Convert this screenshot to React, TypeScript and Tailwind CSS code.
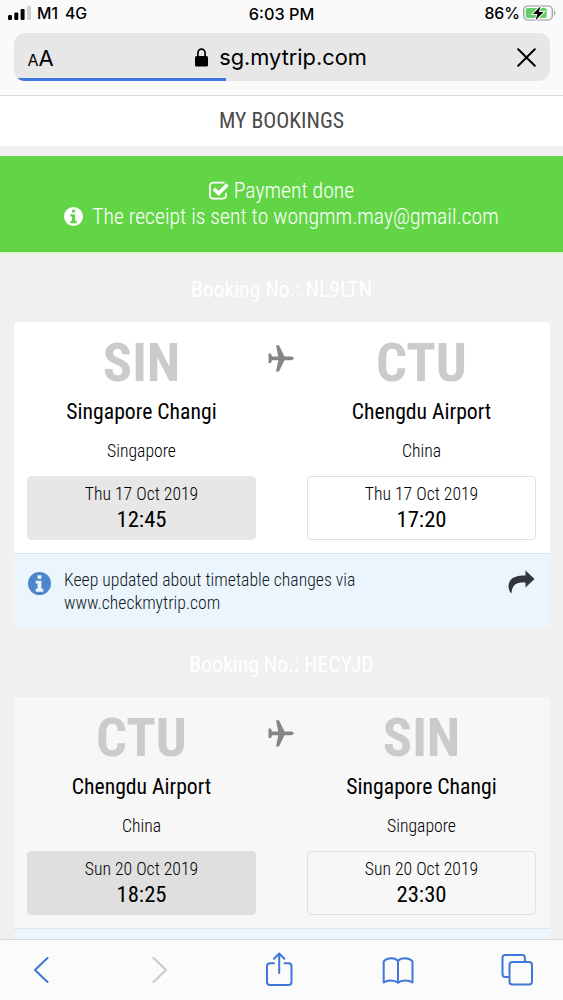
interface Stop {
  code: string;
  airport: string;
  country: string;
  date: string;
  time: string;
}

interface Booking {
  ref: string;
  from: Stop;
  to: Stop;
  dimmed: boolean;
  notice?: string[];
}

const SIN = { code: "SIN", airport: "Singapore Changi", country: "Singapore" };
const CTU = { code: "CTU", airport: "Chengdu Airport", country: "China" };

const BOOKINGS: Booking[] = [
  {
    ref: "NL9LTN",
    from: { ...SIN, date: "Thu 17 Oct 2019", time: "12:45" },
    to: { ...CTU, date: "Thu 17 Oct 2019", time: "17:20" },
    dimmed: false,
    notice: ["Keep updated about timetable changes via", "www.checkmytrip.com"],
  },
  {
    ref: "HECYJD",
    from: { ...CTU, date: "Sun 20 Oct 2019", time: "18:25" },
    to: { ...SIN, date: "Sun 20 Oct 2019", time: "23:30" },
    dimmed: true,
  },
];

function InfoIcon({ size, className }: { size: number; className: string }) {
  return (
    <svg width={size} height={size} viewBox="0 0 24 24" className={className}>
      <path
        fill="currentColor"
        fillRule="evenodd"
        d="M12 0a12 12 0 1 0 0 24 12 12 0 0 0 0-24zM10 3.500h4v3.500h-4zM8 9h6v8.500h2V20.500H8v-3h2V12H8z"
      />
    </svg>
  );
}

function StatusBar() {
  return (
    <div className="grid h-[33px] grid-cols-3 items-start px-2 pt-[4px] text-[16.3px] leading-[20px] font-medium">
      <div className="flex">
        <svg width="24" height="16" viewBox="0 0 24 16" className="mr-[5px]">
          <rect x="0" y="11" width="4" height="5" rx="1.2" />
          <rect x="6.3" y="8.5" width="4" height="7.5" rx="1.2" />
          <rect x="12.6" y="5" width="4" height="11" rx="1.2" />
          <rect x="19" y="2" width="4" height="14" rx="1.2" fill="#cfcfcf" />
        </svg>
        <span className="mr-[7px] text-[15.8px]">M1</span>
        <span className="text-[15.8px]">4G</span>
      </div>
      <span className="text-center">6:03 PM</span>
      <div className="flex justify-end">
        <span className="mr-[3px] text-[15.8px]">86%</span>
        <svg width="33" height="18" viewBox="0 0 33 18" className="-mr-[1px]">
          <rect x="0.7" y="2" width="28.6" height="14" rx="4" fill="none" stroke="#9a9a9a" strokeWidth="1.2" />
          <rect x="2.7" y="4" width="21" height="10" rx="2" fill="#63d069" />
          <path d="M31 6.5c1.6.6 1.6 4.4 0 5z" fill="#9a9a9a" />
          <path d="M17.5 2.2 10 10h4.4l-1.8 6.2L20.5 8h-4.6z" stroke="#fafafa" strokeWidth="2" paintOrder="stroke" />
        </svg>
      </div>
    </div>
  );
}

function AddressBar() {
  return (
    <div className="relative mx-[13.5px] flex h-[48px] shrink-0 items-center justify-between overflow-hidden rounded-[11px] bg-[#e7e7e7] pr-[13px] pl-[14px]">
      <div className="flex w-[40px] items-baseline pt-[2px]">
        <span className="text-[16px]">A</span>
        <span className="text-[22px]">A</span>
      </div>
      <div className="flex items-center">
        <svg width="13" height="19" viewBox="0 0 13 19" className="mr-[11px]">
          <path d="M2.9 9V5.3a3.6 4.1 0 0 1 7.2 0V9" fill="none" stroke="#000" strokeWidth="1.7" />
          <rect y="8" width="13" height="10.5" rx="1.6" />
        </svg>
        <span className="mr-[2px] pt-[1px] text-[21.8px]">sg.mytrip.com</span>
      </div>
      <div className="flex w-[40px] justify-end">
        <svg width="19" height="19" viewBox="0 0 19 19" fill="none" stroke="#000" strokeWidth="2" strokeLinecap="round">
          <path d="m1.2 1.2 16.6 16.6M17.8 1.2 1.2 17.8" />
        </svg>
      </div>
      {/* Page load progress */}
      <div className="absolute bottom-0 left-0 h-[3px] w-[212px] bg-[#3f76e0]" />
    </div>
  );
}

function PaymentBanner() {
  return (
    <div className="h-[98px] shrink-0 border-b-2 border-[#dcf7d4] bg-[#62d546] pt-[22px] text-[21.7px] leading-[26px] font-light text-white">
      <div className="flex items-center justify-center">
        <svg width="21" height="19" viewBox="0 0 21 19" fill="none" stroke="#fff" className="mr-[4px] mb-[2px]">
          <path d="M15.5 1.6H4A3 3 0 0 0 1 4.6v10a3 3 0 0 0 3 3h10a3 3 0 0 0 3-3v-2.8" strokeWidth="1.7" />
          <path d="m5 7.8 4.5 4.6 9-9" strokeWidth="3.5" />
        </svg>
        Payment done
      </div>
      <div className="flex items-center justify-center">
        <InfoIcon size={19} className="mr-[9px] mb-[1px]" />
        The receipt is sent to wongmm.may@gmail.com
      </div>
    </div>
  );
}

function StopColumn({ stop, box }: { stop: Stop; box: string }) {
  return (
    <div className="w-[229px] text-center">
      <div className="h-[78px] pt-[7px] text-[54.5px] leading-[66px] font-bold text-[#cbcbcb]">{stop.code}</div>
      <div className="text-[21.7px] leading-[24px]">{stop.airport}</div>
      <div className="mt-[15px] text-[17.7px] leading-[24px] font-light">{stop.country}</div>
      <div className={`mt-[13px] h-[63.5px] rounded border pt-[5px] ${box}`}>
        <div className="text-[17.7px] leading-[24px] font-light">{stop.date}</div>
        <div className="text-[22.7px] leading-[27px]">{stop.time}</div>
      </div>
    </div>
  );
}

function BookingCard({ booking }: { booking: Booking }) {
  const { dimmed, notice } = booking;
  return (
    <section className="mb-[1px] shrink-0">
      <h2 className="h-[68px] pt-[22px] text-center text-[21.7px] leading-[28px] text-white">
        Booking No.: {booking.ref}
      </h2>
      <div className={`mr-[13px] ml-[14px] rounded-t ${dimmed ? "bg-[#f7f7f7]" : "bg-white"}`}>
        <div className="flex h-[231px] justify-between pr-[14px] pl-[13px]">
          <StopColumn stop={booking.from} box={dimmed ? "border-[#dfdfdf] bg-[#dfdfdf]" : "border-[#e7e7e7] bg-[#e7e7e7]"} />
          <svg width="26" height="28" viewBox="0 0 26 28" className="mt-[22px] mr-[1px] fill-[#868686]">
            <path d="M.5 9.500h2.500l1 2.900h6.300L8 1.200h3l5.500 11.200h6.200c1.800 0 3.100.8 3.100 1.900s-1.300 1.900-3.100 1.900h-6.200L11 27.400H8l2.300-11.200H4L3 19.100H.5z" />
          </svg>
          <StopColumn stop={booking.to} box="border-[#e0e0e0]" />
        </div>
        <div className="flex h-[75px] border-t border-[#dbe4ee] bg-[#ebf5fe] pt-[14px] text-[17.7px] leading-[23px] font-light">
          {notice && (
            <>
              <InfoIcon size={23} className="mt-[4px] ml-[14px] text-[#4e86cb]" />
              <p className="mt-[1px] ml-[13px] flex-1 text-[#111820]">
                {notice.map(line => (
                  <span key={line} className="block">{line}</span>
                ))}
              </p>
              <svg width="28" height="24" viewBox="0 0 28 24" className="mt-[2px] mr-[15px] fill-[#30363b]">
                <path d="M18.500.5 27.500 9l-9 8.500v-5C10 12 5 14 4.500 23.500 1.500 20.500.8 16 2.300 12.200 4.500 7 10 5.400 18.500 5.400z" />
              </svg>
            </>
          )}
        </div>
      </div>
    </section>
  );
}

function Toolbar() {
  return (
    <nav className="h-[61px] shrink-0 border-t border-[#d5d9de] bg-[#fbfbfb]">
      <svg width="563" height="60" viewBox="0 940 563 60" fill="none" stroke="#3f78d8" strokeWidth="2" strokeLinecap="round" strokeLinejoin="round">
        <path d="m47.500 958-12.500 12 12.500 12" />
        <path d="m153.500 958 12.500 12-12.500 12" stroke="#c9c9c9" />
        <path d="M274 963.200h-4a3 3 0 0 0-3 3V982a3 3 0 0 0 3 3h18.500a3 3 0 0 0 3-3v-15.800a3 3 0 0 0-3-3h-4M279.200 973v-19M274 958.800l5.200-5.300 5.200 5.300" />
        <path d="M398 961c-3-3.600-11-3.600-14.300.4v21.100c3.500-2.800 11-2.800 14.300.2 3.300-3 11-3 14.500-.2v-21.100c-3.500-4-11.500-4-14.500-.4zm0 0v21.500" />
        <path d="M508.500 977h-3.300a2.700 2.700 0 0 1-2.700-2.700v-16.600a2.700 2.700 0 0 1 2.700-2.700h17a2.700 2.700 0 0 1 2.700 2.700v3.500" />
        <rect x="509.500" y="962" width="22.500" height="22.500" rx="3" />
      </svg>
    </nav>
  );
}

export default function App() {
  return (
    <div className="flex h-[1000px] w-[563px] flex-col overflow-hidden bg-[#f0f0f0] font-['Roboto_Condensed',Roboto,sans-serif] text-black [font-stretch:75%]">
      <header className="h-[96px] shrink-0 border-b border-[#d9d9d9] bg-[#fafafa] font-[Inter,sans-serif] [font-stretch:100%]">
        <StatusBar />
        <AddressBar />
      </header>
      <main className="flex min-h-0 flex-1 flex-col overflow-hidden">
        <h1 className="mb-[10px] h-[50px] shrink-0 bg-white pt-[10px] text-center text-[21.7px] leading-[29px] text-[#4a4a4a]">
          MY BOOKINGS
        </h1>
        <PaymentBanner />
        {BOOKINGS.map(b => (
          <BookingCard key={b.ref} booking={b} />
        ))}
      </main>
      <Toolbar />
    </div>
  );
}
